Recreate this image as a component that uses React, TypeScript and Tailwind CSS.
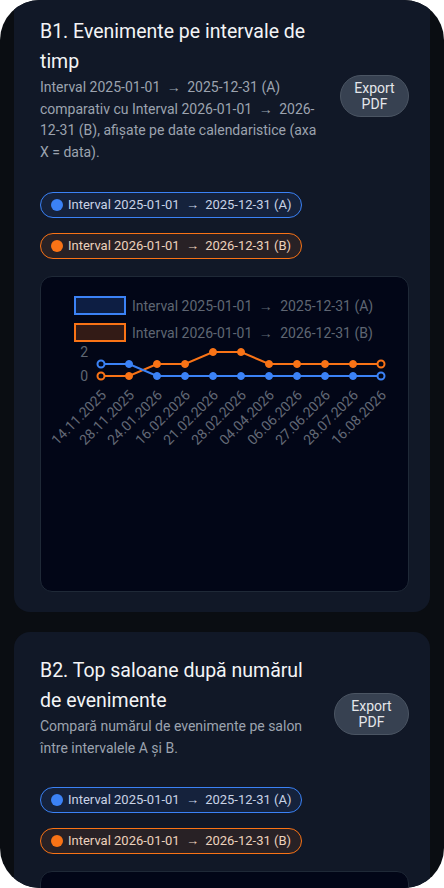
import React from 'react';

const BLUE = '#3b82f6';
const ORANGE = '#f97316';

const dates = [
  '14.11.2025',
  '28.11.2025',
  '24.01.2026',
  '16.02.2026',
  '21.02.2026',
  '28.02.2026',
  '04.04.2026',
  '06.06.2026',
  '27.06.2026',
  '28.07.2026',
  '16.08.2026',
];
const seriesA = [1, 1, 0, 0, 0, 0, 0, 0, 0, 0, 0];
const seriesB = [0, 0, 1, 1, 2, 2, 1, 1, 1, 1, 1];

const px = (i: number) => 60 + i * 28;
const py = (v: number) => 99 - v * 12;

// the arrow sits wider in the original than Roboto gives it
const WithArrows: React.FC<{ text: string }> = ({ text }) => {
  const parts = text.split(' → ');
  return (
    <>
      {parts.map((p, i) => (
        <React.Fragment key={i}>
          {i > 0 && <span className="mx-[3px]"> → </span>}
          {p}
        </React.Fragment>
      ))}
    </>
  );
};

const LineSeries: React.FC<{ data: number[]; color: string }> = ({ data, color }) => (
  <g>
    <polyline
      points={data.map((v, i) => `${px(i)},${py(v)}`).join(' ')}
      fill="none"
      stroke={color}
      strokeWidth={2}
    />
    {data.map((v, i) => {
      const edge = i === 0 || i === data.length - 1;
      return (
        <circle
          key={i}
          cx={px(i)}
          cy={py(v)}
          r={3.5}
          fill={edge ? '#020617' : color}
          stroke={color}
          strokeWidth={edge ? 2 : 1}
        />
      );
    })}
  </g>
);

const LegendText: React.FC<{ y: number; from: string; to: string }> = ({ y, from, to }) => (
  <text x={91} y={y} fontSize={14} fill="#5f6673">
    {`Interval ${from}`}
    <tspan dx={3}> → </tspan>
    <tspan dx={4}>{to}</tspan>
  </text>
);

const Chart: React.FC = () => (
  <div className="h-[316px] rounded-xl border border-[#1f2937] bg-[#020617]">
    <svg width="367" height="314" viewBox="0 0 367 314" style={{ fontFamily: 'Roboto, sans-serif' }}>
      <rect x={34} y={20} width={50} height={17} fill="rgba(59,130,246,0.2)" stroke={BLUE} strokeWidth={2} />
      <LegendText y={34} from="2025-01-01" to="2025-12-31 (A)" />
      <rect x={34} y={47} width={50} height={17} fill="rgba(249,115,22,0.2)" stroke={ORANGE} strokeWidth={2} />
      <LegendText y={61} from="2026-01-01" to="2026-12-31 (B)" />
      <text x={47} y={80} fontSize={14} fill="#5f6673" textAnchor="end">
        2
      </text>
      <text x={47} y={104} fontSize={14} fill="#5f6673" textAnchor="end">
        0
      </text>
      <LineSeries data={seriesB} color={ORANGE} />
      <LineSeries data={seriesA} color={BLUE} />
      {dates.map((d, i) => (
        <text
          key={d}
          x={px(i) + 6}
          y={119}
          fontSize={14}
          fill="#626976"
          textAnchor="end"
          transform={`rotate(-45 ${px(i) + 6} 119)`}
        >
          {d}
        </text>
      ))}
    </svg>
  </div>
);

const Pill: React.FC<{ label: string; tone: 'a' | 'b' }> = ({ label, tone }) => (
  <div
    className={
      tone === 'a'
        ? 'flex h-[26px] items-center gap-[5px] rounded-full border-[1.5px] border-[#3b82f6] bg-[#3b82f6]/10 pl-[10px] pr-[10px] text-[13px] text-[#c9d3e6]'
        : 'flex h-[26px] items-center gap-[5px] rounded-full border-[1.5px] border-[#f97316] bg-[#f97316]/10 pl-[10px] pr-[10px] text-[13px] text-[#ecd2bd]'
    }
  >
    <span className={tone === 'a' ? 'h-3 w-3 rounded-full bg-[#3b82f6]' : 'h-3 w-3 rounded-full bg-[#f97316]'} />
    <span>
      <WithArrows text={label} />
    </span>
  </div>
);

const ReportCard: React.FC<{
  title: string;
  description: string;
  buttonWidth: string;
}> = ({ title, description, buttonWidth }) => (
  <section className="rounded-2xl bg-[#111827] pb-5 pl-[26px] pr-[21px] pt-6">
    <div className="mb-[28px] flex items-center gap-3">
      <div className="min-w-0 flex-1">
        <h2 className="text-[19.5px] leading-[30px] text-[#f3f4f6]">{title}</h2>
        <p className="text-[14px] leading-[21.7px] text-[#9ca3af]">
          <WithArrows text={description} />
        </p>
      </div>
      <button
        className={`${buttonWidth} mt-[12px] shrink-0 rounded-full border border-[#4b5563] bg-[#374151] py-1 text-[14px] leading-4 text-[#e5e7eb]`}
      >
        Export
        <br />
        PDF
      </button>
    </div>
    <div className="flex flex-col items-start gap-[15px]">
      <Pill tone="a" label="Interval 2025-01-01 → 2025-12-31 (A)" />
      <Pill tone="b" label="Interval 2026-01-01 → 2026-12-31 (B)" />
    </div>
    <div className="mt-[17px]">
      <Chart />
    </div>
  </section>
);

export default function App() {
  return (
    <div className="h-[888px] w-[444px] bg-white" style={{ fontFamily: 'Roboto, "Noto Sans", sans-serif' }}>
      <div className="h-full overflow-hidden rounded-[40px] bg-[#0a0d12]">
        <div className="-mt-[7px] flex flex-col gap-5 px-[14px]">
          <ReportCard
            title="B1. Evenimente pe intervale de timp"
            description="Interval 2025-01-01 → 2025-12-31 (A) comparativ cu Interval 2026-01-01 → 2026-12-31 (B), afișate pe date calendaristice (axa X = data)."
            buttonWidth="w-[69px]"
          />
          <ReportCard
            title="B2. Top saloane după numărul de evenimente"
            description="Compară numărul de evenimente pe salon între intervalele A și B."
            buttonWidth="w-[75px]"
          />
        </div>
      </div>
    </div>
  );
}
